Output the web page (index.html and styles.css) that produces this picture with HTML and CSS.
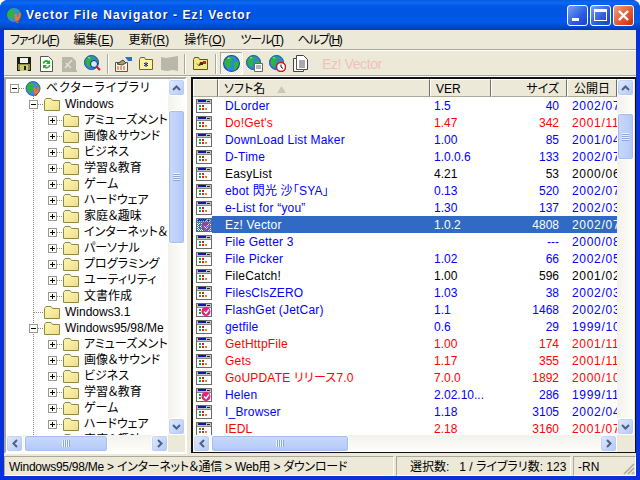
FILE: index.html
```html
<!DOCTYPE html>
<html lang="ja">
<head>
<meta charset="utf-8">
<title>Vector File Navigator - Ez! Vector</title>
<link rel="stylesheet" href="styles.css">
</head>
<body>
<svg class="defs" width="0" height="0">
  <defs>
    <symbol id="globe" viewBox="0 0 16 16">
      <circle cx="8" cy="8" r="7.5" fill="#2f82ea"/>
      <path d="M1 6l4-5 3 1 1 3-2 1 1 3-2 4-2-1-2-3zM10 7l5-2 .5 4-3 5-3 1 1-4zM9 .8l3 1-1 2-2-1z" fill="#2cb43c"/>
      <path d="M4 3l2-1v2z" fill="#c8f0c8"/>
      <circle cx="8" cy="8" r="7.5" fill="none" stroke="#174a96" stroke-width="1"/>
    </symbol>
    <symbol id="logo" viewBox="0 0 16 16">
      <circle cx="8" cy="8" r="7.5" fill="#3f86ec"/>
      <path d="M1 6l4-5 3 1 1 3-2 1 1 3-2 4-2-1-2-3zM11 1.500l3.500 3.500-3 1z" fill="#2cb43c"/>
      <path d="M8 7h2.500l1 4 2-5H16l-4 10h-2z" fill="#f07818"/>
      <circle cx="8" cy="8" r="7.5" fill="none" stroke="#1a4aa0" stroke-width=".8"/>
    </symbol>
    <symbol id="win" viewBox="0 0 16 14">
      <rect x="0.5" y="0.5" width="15" height="13" fill="#fff" stroke="#6a6a6a"/>
      <rect x="1" y="1" width="14" height="3" fill="#c4c4c4"/>
      <rect x="2" y="1" width="8" height="2" fill="#1018a0"/>
      <rect x="11" y="2" width="3" height="1" fill="#222"/>
      <rect x="1" y="4" width="14" height="1" fill="#888"/>
      <rect x="3" y="6" width="2" height="2" fill="#18a030"/>
      <rect x="6" y="6" width="2" height="2" fill="#e02020"/>
      <rect x="3" y="9" width="2" height="2" fill="#18a030"/>
      <rect x="6" y="9" width="2" height="2" fill="#e02020"/>
      <rect x="9" y="9" width="2" height="2" fill="#f08020"/>
    </symbol>
    <symbol id="wincheck" viewBox="0 0 16 14">
      <use href="#win" width="16" height="14"/>
      <circle cx="10" cy="8.500" r="4.500" fill="#e8207c"/>
      <path d="M8 8.500l2 2 3-4" fill="none" stroke="#fff" stroke-width="1.400"/>
    </symbol>
    <symbol id="folder" viewBox="0 0 16 15">
      <path d="M.5 3.500l1.500-2h5l1.500 2h7v10H.5z" fill="url(#fold)" stroke="#8c8c3a"/>
    </symbol>
    <linearGradient id="fold" x1="0" y1="0" x2="1" y2="1">
      <stop offset="0" stop-color="#fff8b0"/>
      <stop offset="1" stop-color="#eedc90"/>
    </linearGradient>
  </defs>
</svg>
<div class="window">
  <header class="titlebar">
    <svg class="title-logo"><use href="#logo"/></svg>
    <span class="title-text">Vector File Navigator - Ez! Vector</span>
    <span class="caption-btn"><i class="cap-min"></i></span>
    <span class="caption-btn"><i class="cap-max"></i></span>
    <span class="caption-btn caption-close">
      <svg width="13" height="13" viewBox="0 0 13 13"><path d="M2 2l9 9M11 2l-9 9" stroke="#fff" stroke-width="2.400"/></svg>
    </span>
  </header>
  <div class="client">
    <nav class="menubar">
      <span class="menu-item menu-kana">ファイル(<u>F</u>)</span>
      <span class="menu-item">編集(<u>E</u>)</span>
      <span class="menu-item">更新(<u>R</u>)</span>
      <span class="menu-item">操作(<u>O</u>)</span>
      <span class="menu-item menu-kana">ツール(<u>T</u>)</span>
      <span class="menu-item menu-kana">ヘルプ(<u>H</u>)</span>
    </nav>
    <div class="toolbar">
      <span class="tool"><svg width="14" height="14" viewBox="0 0 14 14"><path d="M0 0h14v14H0z" fill="#1c1c10"/><path d="M3 1h8v5H3z" fill="#f4f4f0"/><path d="M1 7h12v6H1z" fill="#8f8f3c"/><path d="M3 8h8v6H3z" fill="#c8c878"/><path d="M7 9h2v4H7z" fill="#1c1c10"/></svg></span>
      <span class="tool"><svg width="13" height="16" viewBox="0 0 13 16"><path d="M.5.500h8l4 4v11H.5z" fill="#fff" stroke="#555"/><path d="M2.500 7a4 4 0 0 1 6.500-2l1-1v4H6l1.500-1.500A2.500 2.500 0 0 0 4 8zM10.500 9A4 4 0 0 1 4 11.500L3 12.500V9h4L5.500 10.500A2.500 2.500 0 0 0 9 9z" fill="#24b030"/></svg></span>
      <span class="tool"><svg width="15" height="16" viewBox="0 0 15 16"><path d="M0 1h10l4 4v9h1v2H0z" fill="#b9b6aa"/><path d="M3 12l7-8M4 7l5 5" stroke="#e4e1d6" stroke-width="1.500"/></svg></span>
      <span class="tool"><svg width="17" height="17" viewBox="0 0 17 17"><use href="#globe" width="15" height="15"/><circle cx="10" cy="9" r="3.500" fill="#cfe8ff" stroke="#0a2a80"/><path d="M12.500 11.500l3.500 3.500" stroke="#d01830" stroke-width="2.200"/></svg></span>
      <span class="tool-sep"></span>
      <span class="tool"><svg width="17" height="16" viewBox="0 0 17 16"><path d="M.5 6.500h12v9H.5z" fill="#fff8d8" stroke="#555"/><path d="M2 11h9M2 13h9" stroke="#d04040" stroke-dasharray="2 1"/><path d="M2 8l6-4 3 3-4 2z" fill="#a8a070" stroke="#444"/><path d="M10 1h7v4h-4z" fill="#2a70c8"/></svg></span>
      <span class="tool"><svg width="15" height="13" viewBox="0 0 15 13"><path d="M.5 2.500l1-2h4l1 2h7v10H.5z" fill="#fff3a0" stroke="#6a6a20"/><path d="M7 5v5M5 6.200l4 2.600M9 6.200l-4 2.600" stroke="#1020c0"/></svg></span>
      <span class="tool"><svg width="17" height="15" viewBox="0 0 17 15"><path d="M0 1l5 1 6-1 6-1v15l-5-1-6 1-6-1z" fill="#b9b6aa"/></svg></span>
      <span class="tool-sep"></span>
      <span class="tool"><svg width="15" height="13" viewBox="0 0 15 13"><path d="M.5 2.500l1-2h4l1 2h8v10H.5z" fill="#f6e680" stroke="#5a5a20"/><path d="M3 6l3 2 1-3h3v3H8l-2 1z" fill="#333"/><path d="M10 4h3v3h-3z" fill="#d02020"/></svg></span>
      <span class="tool-sep"></span>
      <span class="tool tool-on"><svg width="17" height="17"><use href="#globe"/></svg></span>
      <span class="tool"><svg width="17" height="17" viewBox="0 0 17 17"><use href="#globe" width="15" height="15"/><path d="M8.500 8.500h8v8h-8z" fill="#fff" stroke="#666"/><path d="M10 11h5M10 13h5" stroke="#666"/></svg></span>
      <span class="tool"><svg width="17" height="17" viewBox="0 0 17 17"><use href="#globe" width="15" height="15"/><circle cx="12" cy="12" r="4.500" fill="#fff" stroke="#d01030" stroke-width="1.500"/><path d="M12 9.500V12l2 1.500" fill="none" stroke="#111"/></svg></span>
      <span class="tool"><svg width="15" height="17" viewBox="0 0 15 17"><path d="M.5 3.500h3V.5h7l4 4v10h-4v2h-10z" fill="#fff" stroke="#444"/><path d="M3.500 3.500v11h7M6 6h6M6 8h6M6 10h6M6 12h6" fill="none" stroke="#555"/></svg></span>
      <span class="tool-label">Ez! Vector</span>
    </div>
    <main class="panes">
      <section class="tree-pane">
        <div class="tree-top">
          <div class="tree">
            <div class="node"><span class="cell"><b class="exp minus"></b></span><svg class="node-ico"><use href="#logo"/></svg><span class="node-text node-root">ベクターライブラリ</span></div>
            <div class="node"><span class="cell"></span><span class="cell line"><b class="exp minus"></b></span><svg class="node-ico"><use href="#folder"/></svg><span class="node-text">Windows</span></div>
            <div class="node"><span class="cell"></span><span class="cell line"></span><span class="cell"><b class="exp plus"></b></span><svg class="node-ico"><use href="#folder"/></svg><span class="node-text">アミューズメント</span></div>
            <div class="node"><span class="cell"></span><span class="cell line"></span><span class="cell"><b class="exp plus"></b></span><svg class="node-ico"><use href="#folder"/></svg><span class="node-text">画像＆サウンド</span></div>
            <div class="node"><span class="cell"></span><span class="cell line"></span><span class="cell"><b class="exp plus"></b></span><svg class="node-ico"><use href="#folder"/></svg><span class="node-text">ビジネス</span></div>
            <div class="node"><span class="cell"></span><span class="cell line"></span><span class="cell"><b class="exp plus"></b></span><svg class="node-ico"><use href="#folder"/></svg><span class="node-text">学習＆教育</span></div>
            <div class="node"><span class="cell"></span><span class="cell line"></span><span class="cell"><b class="exp plus"></b></span><svg class="node-ico"><use href="#folder"/></svg><span class="node-text">ゲーム</span></div>
            <div class="node"><span class="cell"></span><span class="cell line"></span><span class="cell"><b class="exp plus"></b></span><svg class="node-ico"><use href="#folder"/></svg><span class="node-text">ハードウェア</span></div>
            <div class="node"><span class="cell"></span><span class="cell line"></span><span class="cell"><b class="exp plus"></b></span><svg class="node-ico"><use href="#folder"/></svg><span class="node-text">家庭＆趣味</span></div>
            <div class="node"><span class="cell"></span><span class="cell line"></span><span class="cell"><b class="exp plus"></b></span><svg class="node-ico"><use href="#folder"/></svg><span class="node-text">インターネット＆通信</span></div>
            <div class="node"><span class="cell"></span><span class="cell line"></span><span class="cell"><b class="exp plus"></b></span><svg class="node-ico"><use href="#folder"/></svg><span class="node-text">パーソナル</span></div>
            <div class="node"><span class="cell"></span><span class="cell line"></span><span class="cell"><b class="exp plus"></b></span><svg class="node-ico"><use href="#folder"/></svg><span class="node-text">プログラミング</span></div>
            <div class="node"><span class="cell"></span><span class="cell line"></span><span class="cell"><b class="exp plus"></b></span><svg class="node-ico"><use href="#folder"/></svg><span class="node-text">ユーティリティ</span></div>
            <div class="node"><span class="cell"></span><span class="cell line"></span><span class="cell"><b class="exp plus"></b></span><svg class="node-ico"><use href="#folder"/></svg><span class="node-text">文書作成</span></div>
            <div class="node"><span class="cell"></span><span class="cell line leaf"></span><svg class="node-ico"><use href="#folder"/></svg><span class="node-text">Windows3.1</span></div>
            <div class="node"><span class="cell"></span><span class="cell line"><b class="exp minus"></b></span><svg class="node-ico"><use href="#folder"/></svg><span class="node-text">Windows95/98/Me</span></div>
            <div class="node"><span class="cell"></span><span class="cell line"></span><span class="cell"><b class="exp plus"></b></span><svg class="node-ico"><use href="#folder"/></svg><span class="node-text">アミューズメント</span></div>
            <div class="node"><span class="cell"></span><span class="cell line"></span><span class="cell"><b class="exp plus"></b></span><svg class="node-ico"><use href="#folder"/></svg><span class="node-text">画像＆サウンド</span></div>
            <div class="node"><span class="cell"></span><span class="cell line"></span><span class="cell"><b class="exp plus"></b></span><svg class="node-ico"><use href="#folder"/></svg><span class="node-text">ビジネス</span></div>
            <div class="node"><span class="cell"></span><span class="cell line"></span><span class="cell"><b class="exp plus"></b></span><svg class="node-ico"><use href="#folder"/></svg><span class="node-text">学習＆教育</span></div>
            <div class="node"><span class="cell"></span><span class="cell line"></span><span class="cell"><b class="exp plus"></b></span><svg class="node-ico"><use href="#folder"/></svg><span class="node-text">ゲーム</span></div>
            <div class="node"><span class="cell"></span><span class="cell line"></span><span class="cell"><b class="exp plus"></b></span><svg class="node-ico"><use href="#folder"/></svg><span class="node-text">ハードウェア</span></div>
            <div class="node"><span class="cell"></span><span class="cell line"></span><span class="cell"><b class="exp plus"></b></span><svg class="node-ico"><use href="#folder"/></svg><span class="node-text">家庭＆趣味</span></div>
          </div>
          <div class="vscroll">
            <span class="sb-btn"><svg width="9" height="6" viewBox="0 0 9 6"><path d="M1 5l3.500-3.500L8 5" class="chev"/></svg></span>
            <span class="sb-space tree-space"></span>
            <span class="sb-thumb v-thumb tree-thumb"><i class="grip-v"></i></span>
            <span class="sb-fill"></span>
            <span class="sb-btn"><svg width="9" height="6" viewBox="0 0 9 6"><path d="M1 1l3.500 3.500L8 1" class="chev"/></svg></span>
          </div>
        </div>
        <div class="hbar-row">
          <div class="hscroll tree-h">
            <span class="sb-btn"><svg width="6" height="9" viewBox="0 0 6 9"><path d="M5 1L1.500 4.500 5 8" class="chev"/></svg></span>
            <span class="sb-thumb h-thumb tree-hthumb"><i class="grip-h"></i></span>
            <span class="sb-fill"></span>
            <span class="sb-btn"><svg width="6" height="9" viewBox="0 0 6 9"><path d="M1 1l3.500 3.500L1 8" class="chev"/></svg></span>
          </div>
          <span class="sb-corner"></span>
        </div>
      </section>
      <section class="list-pane">
        <div class="list-top">
          <div class="list">
            <div class="list-head">
              <span class="hd hd-ico"></span>
              <span class="hd hd-name">ソフト名<svg class="sort" width="9" height="7" viewBox="0 0 9 7"><path d="M4.500 0L9 7H0z" fill="#c9c7ba"/></svg></span>
              <span class="hd hd-ver">VER</span>
              <span class="hd hd-size">サイズ</span>
              <span class="hd hd-date">公開日</span>
            </div>
            <div class="list-body">
              <div class="row blue"><svg class="row-ico"><use href="#win"/></svg><span class="c-name">DLorder</span><span class="c-ver">1.5</span><span class="c-size">40</span><span class="c-date">2002/07</span></div>
              <div class="row red"><svg class="row-ico"><use href="#win"/></svg><span class="c-name">Do!Get's</span><span class="c-ver">1.47</span><span class="c-size">342</span><span class="c-date">2001/11</span></div>
              <div class="row blue"><svg class="row-ico"><use href="#win"/></svg><span class="c-name">DownLoad List Maker</span><span class="c-ver">1.00</span><span class="c-size">85</span><span class="c-date">2001/04</span></div>
              <div class="row blue"><svg class="row-ico"><use href="#win"/></svg><span class="c-name">D-Time</span><span class="c-ver">1.0.0.6</span><span class="c-size">133</span><span class="c-date">2002/07</span></div>
              <div class="row"><svg class="row-ico"><use href="#win"/></svg><span class="c-name">EasyList</span><span class="c-ver">4.21</span><span class="c-size">53</span><span class="c-date">2000/06</span></div>
              <div class="row blue"><svg class="row-ico"><use href="#win"/></svg><span class="c-name">ebot 閃光 沙「SYA」</span><span class="c-ver">0.13</span><span class="c-size">520</span><span class="c-date">2002/07</span></div>
              <div class="row blue"><svg class="row-ico"><use href="#win"/></svg><span class="c-name">e-List for “you”</span><span class="c-ver">1.30</span><span class="c-size">137</span><span class="c-date">2002/03</span></div>
              <div class="row selected"><span class="row-ico-wrap"><svg class="row-ico"><use href="#wincheck"/></svg></span><span class="c-name">Ez! Vector</span><span class="c-ver">1.0.2</span><span class="c-size">4808</span><span class="c-date">2002/07</span></div>
              <div class="row blue"><svg class="row-ico"><use href="#win"/></svg><span class="c-name">File Getter 3</span><span class="c-ver"></span><span class="c-size">---</span><span class="c-date">2000/08</span></div>
              <div class="row blue"><svg class="row-ico"><use href="#win"/></svg><span class="c-name">File Picker</span><span class="c-ver">1.02</span><span class="c-size">66</span><span class="c-date">2002/05</span></div>
              <div class="row"><svg class="row-ico"><use href="#win"/></svg><span class="c-name">FileCatch!</span><span class="c-ver">1.00</span><span class="c-size">596</span><span class="c-date">2001/02</span></div>
              <div class="row blue"><svg class="row-ico"><use href="#win"/></svg><span class="c-name">FilesClsZERO</span><span class="c-ver">1.03</span><span class="c-size">38</span><span class="c-date">2002/03</span></div>
              <div class="row blue"><svg class="row-ico"><use href="#wincheck"/></svg><span class="c-name">FlashGet (JetCar)</span><span class="c-ver">1.1</span><span class="c-size">1468</span><span class="c-date">2002/03</span></div>
              <div class="row blue"><svg class="row-ico"><use href="#win"/></svg><span class="c-name">getfile</span><span class="c-ver">0.6</span><span class="c-size">29</span><span class="c-date">1999/10</span></div>
              <div class="row red"><svg class="row-ico"><use href="#win"/></svg><span class="c-name">GetHttpFile</span><span class="c-ver">1.00</span><span class="c-size">174</span><span class="c-date">2001/11</span></div>
              <div class="row red"><svg class="row-ico"><use href="#win"/></svg><span class="c-name">Gets</span><span class="c-ver">1.17</span><span class="c-size">355</span><span class="c-date">2001/11</span></div>
              <div class="row red"><svg class="row-ico"><use href="#win"/></svg><span class="c-name">GoUPDATE リリース7.0</span><span class="c-ver">7.0.0</span><span class="c-size">1892</span><span class="c-date">2000/10</span></div>
              <div class="row blue"><svg class="row-ico"><use href="#wincheck"/></svg><span class="c-name">Helen</span><span class="c-ver">2.02.10...</span><span class="c-size">286</span><span class="c-date">1999/11</span></div>
              <div class="row blue"><svg class="row-ico"><use href="#win"/></svg><span class="c-name">I_Browser</span><span class="c-ver">1.18</span><span class="c-size">3105</span><span class="c-date">2002/04</span></div>
              <div class="row red"><svg class="row-ico"><use href="#win"/></svg><span class="c-name">IEDL</span><span class="c-ver">2.18</span><span class="c-size">3160</span><span class="c-date">2001/07</span></div>
            </div>
          </div>
          <div class="vscroll list-v">
            <span class="sb-btn"><svg width="9" height="6" viewBox="0 0 9 6"><path d="M1 5l3.500-3.500L8 5" class="chev"/></svg></span>
            <span class="sb-space list-space"></span>
            <span class="sb-thumb v-thumb list-thumb"><i class="grip-v"></i></span>
            <span class="sb-fill"></span>
            <span class="sb-btn"><svg width="9" height="6" viewBox="0 0 9 6"><path d="M1 1l3.500 3.500L8 1" class="chev"/></svg></span>
          </div>
        </div>
        <div class="hbar-row">
          <div class="hscroll">
            <span class="sb-btn"><svg width="6" height="9" viewBox="0 0 6 9"><path d="M5 1L1.500 4.500 5 8" class="chev"/></svg></span>
            <span class="sb-thumb h-thumb list-hthumb"><i class="grip-h"></i></span>
            <span class="sb-fill"></span>
            <span class="sb-btn"><svg width="6" height="9" viewBox="0 0 6 9"><path d="M1 1l3.500 3.500L1 8" class="chev"/></svg></span>
          </div>
          <span class="sb-corner"></span>
        </div>
      </section>
    </main>
    <footer class="statusbar">
      <span class="st st-path">Windows95/98/Me &gt; インターネット＆通信 &gt; Web用 &gt; ダウンロード</span>
      <span class="st st-count">選択数:&nbsp;&nbsp;&nbsp;1 / ライブラリ数: 123</span>
      <span class="st st-flag">-RN</span>
      <svg class="gripper" width="12" height="12" viewBox="0 0 12 12"><path d="M11 1L1 11M11 5l-6 6M11 9l-2 2" stroke="#aca899" stroke-width="1.500"/></svg>
    </footer>
  </div>
</div>
</body>
</html>
```

FILE: styles.css
```css
* { box-sizing: border-box; }
html, body { margin: 0; padding: 0; background: #fff; overflow: hidden; }
body { width: 640px; height: 480px; font: 12px/16px "Liberation Sans", "Noto Sans CJK JP", sans-serif; font-feature-settings: "palt"; color: #000; }
.defs { position: absolute; }
.window { width: 640px; height: 480px; display: flex; flex-direction: column; border-radius: 8px 8px 0 0; overflow: hidden; background: #0831d9; }
.titlebar { height: 30px; flex: none; display: flex; align-items: center; padding: 0 6px; color: #fff;
  background: linear-gradient(180deg, #0a5be0 0, #0a6af4 3px, #0058e6 6px, #0055e3 14px, #0259ea 22px, #0048d0 27px, #0038b0 30px); }
.title-logo { width: 16px; height: 16px; margin-right: 4px; flex: none; }
.title-text { flex: 1; font: bold 12px/16px "Liberation Sans", sans-serif; letter-spacing: 1.100px; text-shadow: 1px 1px #0f1f80; white-space: nowrap; }
.caption-btn { width: 21px; height: 21px; margin-left: 2px; display: flex; align-items: center; justify-content: center; border: 1px solid #fff; border-radius: 3px; background: linear-gradient(135deg, #7aa2f0, #2a5be0 60%, #1a45c8); }
.caption-close { background: linear-gradient(135deg, #f0a080, #e0562e 60%, #c03010); }
.cap-min { width: 7px; height: 3px; background: #fff; margin: 9px 5px 0 0; }
.cap-max { width: 13px; height: 12px; border: 1px solid #fff; border-top-width: 3px; }
.client { flex: 1; margin: 0 4px 4px; background: #ece9d8; display: flex; flex-direction: column; min-height: 0; }
.menubar { height: 20px; flex: none; display: flex; padding-left: 6px; border-bottom: 1px solid #aca899; box-shadow: 0 1px #fff; }
.menu-item { padding: 2px 0 0; margin-right: 15px; white-space: nowrap; }
.menu-kana { letter-spacing: -1.200px; }
.toolbar { height: 24px; margin-top: 2px; flex: none; display: flex; align-items: center; padding-left: 8px; border-bottom: 1px solid #aca899; box-shadow: 0 1px #fff; }
.tool { width: 23px; height: 23px; display: flex; align-items: center; justify-content: center; flex: none; }
.tool-on { background: repeating-conic-gradient(#fff 0 25%, #ece9d8 0 50%) 0 0/2px 2px; box-shadow: inset -1px -1px #fff, inset 1px 1px #aca899; }
.tool-sep { width: 2px; height: 20px; margin: 0 3px; flex: none; background: linear-gradient(90deg, #aca899 1px, #fff 1px); }
.tool-label { margin-left: 10px; color: #f0c0c0; font-size: 14px; letter-spacing: -.4px; white-space: nowrap; }
.panes { flex: 1; min-height: 0; display: flex; margin-top: 1px; gap: 4px; }
.tree-pane { width: 183px; flex: none; display: flex; flex-direction: column; border: 2px solid #ece9d8; border-left-color: #aca899; border-top-color: #aca899; border-right-color: #fff; border-bottom-color: #fff; background: #fff; }
.list-pane { flex: 1; min-width: 0; display: flex; flex-direction: column; background: #ece9d8; border-left: 2px solid #111; border-top: 2px solid #111; border-right: 1px solid #111; border-bottom: 1px solid #111; margin-bottom: 1px; padding-right: 1px; }
.tree-top, .list-top { flex: 1; min-height: 0; display: flex; }
.tree { flex: 1; min-width: 0; overflow: hidden; padding-top: 1px; }
.node { height: 16px; display: flex; align-items: center; white-space: nowrap; }
.node-root { letter-spacing: .9px; }
.cell { width: 19px; height: 16px; flex: none; position: relative; }
.line { background: repeating-linear-gradient(180deg, #8a8a8a 0 1px, transparent 1px 2px) 8px 0/1px 100% no-repeat; }
.leaf::after { content: ""; position: absolute; left: 9px; top: 8px; width: 10px; height: 1px; background: repeating-linear-gradient(90deg, #8a8a8a 0 1px, transparent 1px 2px); }
.exp { position: absolute; left: 4px; top: 4px; width: 9px; height: 9px; border: 1px solid #9a9a8a; background: #fff; }
.exp::before { content: ""; position: absolute; left: 1px; top: 3px; width: 5px; height: 1px; background: #000; }
.plus::after { content: ""; position: absolute; left: 3px; top: 1px; width: 1px; height: 5px; background: #000; }
.cell:has(.exp)::after { content: ""; position: absolute; left: 13px; top: 8px; width: 6px; height: 1px; background: repeating-linear-gradient(90deg, #8a8a8a 0 1px, transparent 1px 2px); }
.node-ico { width: 16px; height: 15px; flex: none; margin-right: 5px; }
.vscroll { width: 17px; flex: none; display: flex; flex-direction: column; background: linear-gradient(90deg, #f3f1ec, #fefefb); }
.hscroll { flex: 1; min-width: 0; display: flex; height: 17px; background: linear-gradient(180deg, #f3f1ec, #fefefb); }
.sb-btn { width: 17px; height: 17px; flex: none; display: flex; align-items: center; justify-content: center; border: 1px solid #fff; border-radius: 3px; background: linear-gradient(135deg, #e1eafe, #b4c8f6); box-shadow: inset 0 0 0 1px rgba(174,200,240,.5); }
.chev { fill: none; stroke: #4d6185; stroke-width: 2; }
.sb-thumb { flex: none; display: flex; align-items: center; justify-content: center; border: 1px solid #fff; border-radius: 3px; box-shadow: 0 0 0 1px #a7bff0 inset; }
.v-thumb { width: 17px; background: linear-gradient(90deg, #c9d8fc, #bcd0fa 60%, #b2c7f6); }
.h-thumb { height: 17px; background: linear-gradient(180deg, #c9d8fc, #bcd0fa 60%, #b2c7f6); }
.sb-fill { flex: 1; min-width: 0; min-height: 0; }
.sb-space { flex: none; }
.tree-space { height: 14px; }
.tree-thumb { height: 134px; }
.list-space { height: 17px; }
.list-thumb { height: 47px; }
.tree-hthumb { width: 84px; margin-left: 1px; }
.list-hthumb { width: 138px; margin-left: 1px; }
.grip-v { width: 7px; height: 8px; background: repeating-linear-gradient(180deg, #eef4fe 0 1px, #8aa8e0 1px 2px); }
.grip-h { width: 8px; height: 7px; background: repeating-linear-gradient(90deg, #eef4fe 0 1px, #8aa8e0 1px 2px); }
.hbar-row { height: 17px; flex: none; display: flex; }
.sb-corner { width: 17px; flex: none; background: #ece9d8; }
.list { flex: 1; min-width: 0; overflow: hidden; display: flex; flex-direction: column; background: #fff; }
.list-head { height: 18px; flex: none; display: flex; }
.hd { height: 18px; flex: none; padding: 1px 6px 0; background: #ece9d8; border: 1px solid; border-color: #fff #716f64 #aca899 #fff; white-space: nowrap; overflow: hidden; }
.hd-ico { width: 25px; }
.hd-name { width: 212px; padding-left: 5px; }
.sort { margin-left: 12px; }
.hd-ver { width: 61px; padding-left: 5px; }
.hd-size { width: 76px; text-align: right; padding-right: 7px; }
.hd-date { flex: 1; min-width: 0; padding-left: 6px; }
.list-body { flex: 1; min-height: 0; overflow: hidden; }
.row { height: 17px; display: flex; align-items: center; white-space: nowrap; padding-left: 3px; }
.row.blue { color: #0000ff; }
.row.red { color: #ff0000; }
.row-ico { width: 16px; height: 14px; flex: none; margin-right: 12px; }
.row-ico-wrap { position: relative; display: flex; flex: none; width: 28px; height: 14px; }
.row-ico-wrap::after { content: ""; position: absolute; left: 0; top: 0; width: 16px; height: 14px; background: repeating-conic-gradient(#316ac5 0 25%, transparent 0 50%) 0 0/2px 2px; }
.selected { color: #fff; background: linear-gradient(90deg, transparent 19px, #316ac5 19px); }
.selected .row-ico { margin-right: 0; }
.c-name { width: 206px; flex: none; padding-left: 1px; letter-spacing: .2px; }
.c-ver { width: 61px; flex: none; padding-left: 4px; overflow: hidden; }
.c-size { width: 75px; flex: none; text-align: right; padding-right: 7px; }
.c-date { flex: 1; min-width: 0; padding-left: 6px; overflow: hidden; letter-spacing: .7px; }
.statusbar { height: 20px; flex: none; margin-top: 2px; display: flex; position: relative; }
.st { display: block; padding: 2px 4px 0; border: 1px solid; border-color: #aca899 #fff #fff #aca899; white-space: nowrap; overflow: hidden; }
.st-path { width: 390px; letter-spacing: -.25px; }
.st-count { width: 175px; margin-left: 2px; padding-left: 13px; }
.st-flag { flex: 1; margin-left: 2px; }
.gripper { position: absolute; right: 1px; bottom: 1px; }
```
